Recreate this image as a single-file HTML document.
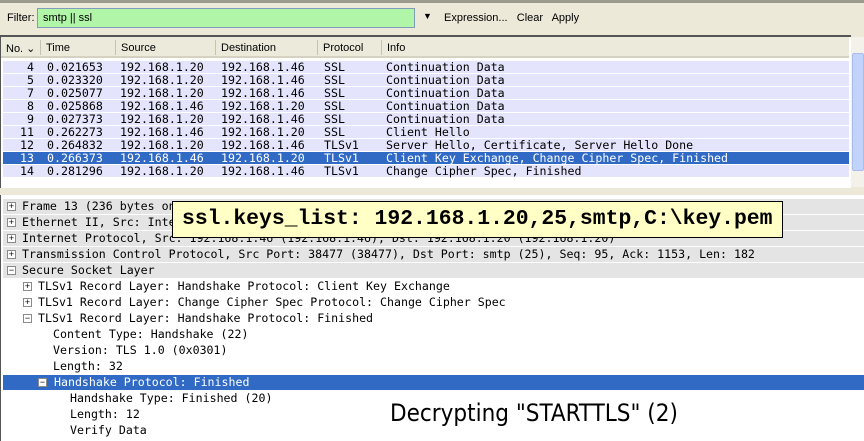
<!DOCTYPE html>
<html><head><meta charset="utf-8"><style>
*{margin:0;padding:0;box-sizing:border-box}
body{width:864px;height:441px;background:#ece9d8;position:relative;overflow:hidden;font-family:"DejaVu Sans Mono",monospace;font-size:11.6px;color:#000}
.abs{position:absolute}
.ui{font-family:"Liberation Sans",sans-serif;font-size:11px}
.row{position:absolute;left:3px;width:846px;height:12px;background:#e4e4fc;line-height:12px;white-space:pre}
.row span{position:absolute}
.sel{background:#316ac5;color:#fff}
.d{position:absolute;left:3px;right:0;height:15px;line-height:15px;white-space:pre}
.g{background:#e4e4e4}
.box{position:absolute;width:9px;height:9px;border:1px solid #8a8a8a;background:#fff;font-size:9px;line-height:7px;text-align:center;color:#000;font-family:"Liberation Sans",sans-serif}
</style></head><body>
<div class="abs" style="left:0;top:0;width:864px;height:3px;background:#9c9a8c"></div>
<div class="abs ui" style="left:7px;top:12px">Filter:</div>
<div class="abs ui" style="left:37px;top:8px;width:378px;height:20px;background:#b0f5a8;border:1px solid #7f9db9;padding:3px 5px">smtp || ssl</div>
<div class="abs ui" style="left:423px;top:11px;font-size:9px">▼</div>
<div class="abs ui" style="left:444px;top:12px">Expression...&nbsp;&nbsp; Clear&nbsp;&nbsp; Apply</div>
<div class="abs" style="left:0;top:35px;width:851px;height:153px;background:#fff;border-top:2px solid #555;border-left:1px solid #555"></div>
<div class="abs ui" style="left:1px;top:37px;width:848px;height:21px;background:#ebeadb;border-bottom:2px solid #d6d2c2"></div>
<div class="abs ui" style="left:6px;top:42px">No. ⌄</div>
<div class="abs ui" style="left:46px;top:42px">Time</div>
<div class="abs ui" style="left:121px;top:42px">Source</div>
<div class="abs ui" style="left:221px;top:42px">Destination</div>
<div class="abs ui" style="left:323px;top:42px">Protocol</div>
<div class="abs ui" style="left:387px;top:42px">Info</div>
<div class="abs" style="left:40px;top:40px;width:1px;height:15px;background:#c5c2b2"></div>
<div class="abs" style="left:115px;top:40px;width:1px;height:15px;background:#c5c2b2"></div>
<div class="abs" style="left:215px;top:40px;width:1px;height:15px;background:#c5c2b2"></div>
<div class="abs" style="left:317px;top:40px;width:1px;height:15px;background:#c5c2b2"></div>
<div class="abs" style="left:381px;top:40px;width:1px;height:15px;background:#c5c2b2"></div>
<div class="abs" style="left:851px;top:37px;width:13px;height:150px;background:#f3f1ea"></div>
<div class="abs" style="left:852px;top:53px;width:12px;height:118px;background:#c1d3fb;border:1px solid #a8bde9;border-radius:2px"></div>

<div class="row" style="top:61px"><span style="left:24px">4</span><span style="left:44px">0.021653</span><span style="left:117px">192.168.1.20</span><span style="left:218px">192.168.1.46</span><span style="left:321px">SSL</span><span style="left:383px">Continuation Data</span></div>
<div class="row" style="top:74px"><span style="left:24px">5</span><span style="left:44px">0.023320</span><span style="left:117px">192.168.1.20</span><span style="left:218px">192.168.1.46</span><span style="left:321px">SSL</span><span style="left:383px">Continuation Data</span></div>
<div class="row" style="top:87px"><span style="left:24px">7</span><span style="left:44px">0.025077</span><span style="left:117px">192.168.1.20</span><span style="left:218px">192.168.1.46</span><span style="left:321px">SSL</span><span style="left:383px">Continuation Data</span></div>
<div class="row" style="top:100px"><span style="left:24px">8</span><span style="left:44px">0.025868</span><span style="left:117px">192.168.1.46</span><span style="left:218px">192.168.1.20</span><span style="left:321px">SSL</span><span style="left:383px">Continuation Data</span></div>
<div class="row" style="top:113px"><span style="left:24px">9</span><span style="left:44px">0.027373</span><span style="left:117px">192.168.1.20</span><span style="left:218px">192.168.1.46</span><span style="left:321px">SSL</span><span style="left:383px">Continuation Data</span></div>
<div class="row" style="top:126px"><span style="left:17px">11</span><span style="left:44px">0.262273</span><span style="left:117px">192.168.1.46</span><span style="left:218px">192.168.1.20</span><span style="left:321px">SSL</span><span style="left:383px">Client Hello</span></div>
<div class="row" style="top:139px"><span style="left:17px">12</span><span style="left:44px">0.264832</span><span style="left:117px">192.168.1.20</span><span style="left:218px">192.168.1.46</span><span style="left:321px">TLSv1</span><span style="left:383px">Server Hello, Certificate, Server Hello Done</span></div>
<div class="row sel" style="top:152px"><span style="left:17px">13</span><span style="left:44px">0.266373</span><span style="left:117px">192.168.1.46</span><span style="left:218px">192.168.1.20</span><span style="left:321px">TLSv1</span><span style="left:383px">Client Key Exchange, Change Cipher Spec, Finished</span></div>
<div class="row" style="top:165px"><span style="left:17px">14</span><span style="left:44px">0.281296</span><span style="left:117px">192.168.1.20</span><span style="left:218px">192.168.1.46</span><span style="left:321px">TLSv1</span><span style="left:383px">Change Cipher Spec, Finished</span></div>

<div class="abs" style="left:0;top:195px;width:864px;height:246px;background:#fff;border-left:1px solid #555"></div>
<div class="d g" style="top:199px"><span class="box" style="left:4px;top:3px">+</span><span style="position:absolute;left:19px">Frame 13 (236 bytes on wire, 236 bytes captured)</span></div>
<div class="d g" style="top:215px"><span class="box" style="left:4px;top:3px">+</span><span style="position:absolute;left:19px">Ethernet II, Src: Intel_00:00:00 (00:00:00:00:00:00), Dst: 00:00:00:00:00:00</span></div>
<div class="d g" style="top:231px"><span class="box" style="left:4px;top:3px">+</span><span style="position:absolute;left:19px">Internet Protocol, Src: 192.168.1.46 (192.168.1.46), Dst: 192.168.1.20 (192.168.1.20)</span></div>
<div class="d g" style="top:247px"><span class="box" style="left:4px;top:3px">+</span><span style="position:absolute;left:19px">Transmission Control Protocol, Src Port: 38477 (38477), Dst Port: smtp (25), Seq: 95, Ack: 1153, Len: 182</span></div>
<div class="d g" style="top:263px"><span class="box" style="left:4px;top:3px">−</span><span style="position:absolute;left:19px">Secure Socket Layer</span></div>
<div class="d" style="top:279px"><span class="box" style="left:20px;top:3px">+</span><span style="position:absolute;left:35px">TLSv1 Record Layer: Handshake Protocol: Client Key Exchange</span></div>
<div class="d" style="top:295px"><span class="box" style="left:20px;top:3px">+</span><span style="position:absolute;left:35px">TLSv1 Record Layer: Change Cipher Spec Protocol: Change Cipher Spec</span></div>
<div class="d" style="top:311px"><span class="box" style="left:20px;top:3px">−</span><span style="position:absolute;left:35px">TLSv1 Record Layer: Handshake Protocol: Finished</span></div>
<div class="d" style="top:327px"><span style="position:absolute;left:50px">Content Type: Handshake (22)</span></div>
<div class="d" style="top:343px"><span style="position:absolute;left:50px">Version: TLS 1.0 (0x0301)</span></div>
<div class="d" style="top:359px"><span style="position:absolute;left:50px">Length: 32</span></div>
<div class="d sel" style="top:375px"><span class="box" style="left:35px;top:3px">−</span><span style="position:absolute;left:51px">Handshake Protocol: Finished</span></div>
<div class="d" style="top:391px"><span style="position:absolute;left:67px">Handshake Type: Finished (20)</span></div>
<div class="d" style="top:407px"><span style="position:absolute;left:67px">Length: 12</span></div>
<div class="d" style="top:423px"><span style="position:absolute;left:67px">Verify Data</span></div>

<div class="abs" style="left:172px;top:201px;width:611px;height:37px;background:#ffffc6;border:1px solid #000;font-family:'Liberation Mono',monospace;font-weight:bold;font-size:21.4px;line-height:35px;padding-left:9px;white-space:pre">ssl.keys_list: 192.168.1.20,25,smtp,C:\key.pem</div>
<div class="abs" style="left:390px;top:399px;font-family:'DejaVu Sans Condensed','DejaVu Sans',sans-serif;font-size:24px;white-space:pre">Decrypting "STARTTLS" (2)</div>
</body></html>
